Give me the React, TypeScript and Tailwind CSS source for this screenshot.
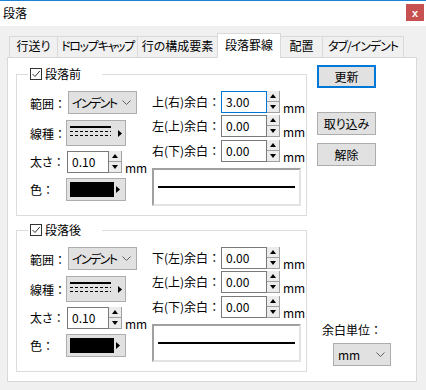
import React from "react";

function Checkbox() {
  return (
    <svg width="12" height="12" viewBox="0 0 12 12" className="shrink-0">
      <rect x="0.5" y="0.5" width="11" height="11" fill="#fff" stroke="#333" />
      <path d="M2.5 6 L5 8.5 L9.8 3" fill="none" stroke="#333" strokeWidth="1" />
    </svg>
  );
}

function Chevron() {
  return (
    <svg width="9" height="5" viewBox="0 0 9 5" className="shrink-0">
      <path d="M0.5 0.5 L4.5 4.5 L8.5 0.5" fill="none" stroke="#606060" strokeWidth="1" />
    </svg>
  );
}

function RightArrow() {
  return (
    <svg width="4" height="7" viewBox="0 0 4 7" className="shrink-0">
      <polygon points="0,0 4,3.5 0,7" fill="#000" />
    </svg>
  );
}

function Colon() {
  return <span className="[font-feature-settings:normal]">：</span>;
}

function Spinner() {
  return (
    <div className="flex flex-col w-[13px] h-[22px]">
      <div className="h-[11px] bg-[#ececec] border-r border-b border-[#a0a0a0] flex items-center justify-center">
        <svg width="6" height="4" viewBox="0 0 6 4">
          <polygon points="0,4 3,0 6,4" fill="#000" />
        </svg>
      </div>
      <div className="h-[11px] bg-[#ececec] border-r border-b border-[#a0a0a0] flex items-center justify-center">
        <svg width="6" height="4" viewBox="0 0 6 4">
          <polygon points="0,0 6,0 3,4" fill="#000" />
        </svg>
      </div>
    </div>
  );
}

function Dropdown({ text, width, tight }: { text: string; width: string; tight?: boolean }) {
  return (
    <div
      className={`${width} h-[23px] border border-[#adadad] bg-[#e1e1e1] flex items-center justify-between pl-[3px] pr-[5px]`}
    >
      <span className={tight ? "leading-[16px] whitespace-nowrap tracking-[-1.6px]" : "leading-[16px] whitespace-nowrap pl-[1px]"}>
        {text}
      </span>
      <Chevron />
    </div>
  );
}

function LineButton() {
  return (
    <div className="w-[60px] h-[26px] border border-[#adadad] bg-[#e1e1e1] flex items-start pl-[3px] pt-[5px]">
      <svg width="52" height="13" viewBox="0 0 52 13">
        <rect x="0" y="0" width="41" height="2" fill="#000" />
        <line x1="0" y1="5.5" x2="41" y2="5.5" stroke="#000" strokeDasharray="3 2" />
        <line x1="0" y1="9.5" x2="41" y2="9.5" stroke="#000" strokeDasharray="3 2" />
        <polygon points="48,4 52,7.5 48,11" fill="#000" />
      </svg>
    </div>
  );
}

function ColorButton() {
  return (
    <div className="w-[60px] h-[23px] border border-[#adadad] bg-[#e1e1e1] flex items-center pl-[3px] gap-[2px]">
      <div className="w-[44px] h-[15px] bg-black" />
      <RightArrow />
    </div>
  );
}

function SpinField({ value, focused, inputW }: { value: string; focused?: boolean; inputW: "small" | "large" }) {
  const border = focused ? "border-[#0078d7]" : "border-[#7a7a7a]";
  const w = inputW === "small" ? "w-[42px]" : "w-[46px]";
  return (
    <div className="flex">
      <div className={`${w} h-[22px] border ${border} bg-white flex items-center pl-[4px]`}>
        <span className="leading-[16px]">{value}</span>
      </div>
      <Spinner />
      <span className="self-end ml-[3px] leading-[14px] mb-[-2px]">mm</span>
    </div>
  );
}

function Group({ title, labels, first }: { title: string; labels: string[]; first: string }) {
  return (
    <fieldset className="w-[291px] h-[150px] border border-[#dcdcdc] min-w-0">
      <legend className="ml-[11px] w-[74px] h-[16px] pl-[2px]">
        <span className="flex items-center gap-[3px] h-[16px]">
          <Checkbox />
          <span className="leading-[16px]">{title}</span>
        </span>
      </legend>
      <div className="flex pt-[9px]">
        <div className="w-[135px] pl-[13px] flex flex-col">
          <div className="flex items-center h-[23px]">
            <span className="w-[38px] leading-[16px] mt-[3px] whitespace-nowrap">
              範囲<Colon />
            </span>
            <Dropdown text="インデント" width="w-[69px]" tight />
          </div>
          <div className="flex items-center h-[26px] mt-[6px]">
            <span className="w-[36px] leading-[16px] mt-[2px] whitespace-nowrap">
              線種<Colon />
            </span>
            <LineButton />
          </div>
          <div className="flex items-center h-[22px] mt-[5px]">
            <span className="w-[37px] leading-[16px] whitespace-nowrap">
              太さ<Colon />
            </span>
            <SpinField value="0.10" inputW="small" />
          </div>
          <div className="flex items-center h-[23px] mt-[5px]">
            <span className="w-[36px] leading-[16px] mt-[1px] whitespace-nowrap">
              色<Colon />
            </span>
            <ColorButton />
          </div>
        </div>
        <div className="flex flex-col">
          <div className="flex items-center h-[22px]">
            <span className="w-[69px] leading-[16px] whitespace-nowrap">
              {labels[0]}
              <Colon />
            </span>
            <SpinField value={first} focused={first === "3.00"} inputW="large" />
          </div>
          <div className="flex items-center h-[22px] mt-[2px]">
            <span className="w-[69px] leading-[16px] whitespace-nowrap">
              {labels[1]}
              <Colon />
            </span>
            <SpinField value="0.00" inputW="large" />
          </div>
          <div className="flex items-center h-[22px] mt-[3px]">
            <span className="w-[69px] leading-[16px] whitespace-nowrap">
              {labels[2]}
              <Colon />
            </span>
            <SpinField value="0.00" inputW="large" />
          </div>
          <div className="w-[149px] h-[38px] mt-[6px] border-2 border-t-[#a0a0a0] border-l-[#a0a0a0] border-r-[#e3e3e3] border-b-[#e3e3e3] bg-white flex items-center px-[4px]">
            <div className="w-full h-[2px] bg-black" />
          </div>
        </div>
      </div>
    </fieldset>
  );
}

function Button({ text, primary }: { text: string; primary?: boolean }) {
  return (
    <div
      className={
        primary
          ? "w-[59px] h-[23px] border-2 border-[#0078d7] bg-[#e1e1e1] flex items-center justify-center"
          : "w-[59px] h-[23px] border border-[#adadad] bg-[#e1e1e1] flex items-center justify-center"
      }
    >
      <span className="leading-[16px] whitespace-nowrap">{text}</span>
    </div>
  );
}

const tabs: { label: string; w: string; tr: string; active?: boolean; bl: boolean; br: boolean }[] = [
  { label: "行送り", w: "w-[48px]", tr: "", bl: true, br: false },
  { label: "ドロップキャップ", w: "w-[80px]", tr: "tracking-[-1.3px]", bl: true, br: false },
  { label: "行の構成要素", w: "w-[80px]", tr: "", bl: true, br: false },
  { label: "段落罫線", w: "w-[64px]", tr: "", active: true, bl: true, br: true },
  { label: "配置", w: "w-[41px]", tr: "", bl: false, br: false },
  { label: "タブ/インデント", w: "w-[82px]", tr: "tracking-[-1px]", bl: true, br: true },
];

export default function App() {
  return (
    <div className="w-[426px] h-[390px] bg-[#f0f0f0] overflow-hidden text-[12px] text-black font-['Noto_Sans_CJK_JP','Noto_Sans',sans-serif] [font-feature-settings:'palt']">
      <div className="h-[26px] bg-white border-t border-[#1b84d6] flex items-start justify-between">
        <span className="ml-[3px] mt-[4px] leading-[16px]">段落</span>
        <div className="mt-[3px] mr-[2px] w-[18px] h-[17px] bg-[#c75050] flex items-center justify-center">
          <span className="text-white text-[11px] font-bold leading-[12px] font-['Liberation_Sans',sans-serif]">x</span>
        </div>
      </div>
      <div className="flex items-end h-[31px] pl-[9px]">
        {tabs.map((t) => (
          <div
            key={t.label}
            className={[
              t.w,
              "flex items-center justify-center border-t border-[#d9d9d9]",
              t.active ? "h-[25px] bg-white mb-[-1px] relative z-10 pb-[3px]" : "h-[21px] bg-[#f0f0f0] pb-[2px]",
              t.bl ? "border-l" : "",
              t.br ? "border-r" : "",
            ].join(" ")}
          >
            <span className={`leading-[16px] whitespace-nowrap ${t.tr}`}>{t.label}</span>
          </div>
        ))}
      </div>
      <div className="ml-[7px] w-[410px] h-[325px] border border-[#d9d9d9] bg-white flex">
        <div className="ml-[8px] mt-[8px] flex flex-col gap-[6px]">
          <Group title="段落前" labels={["上(右)余白", "左(上)余白", "右(下)余白"]} first="3.00" />
          <Group title="段落後" labels={["下(左)余白", "左(上)余白", "右(下)余白"]} first="0.00" />
        </div>
        <div className="ml-[10px] mt-[7px] flex flex-col">
          <Button text="更新" primary />
          <div className="mt-[24px]">
            <Button text="取り込み" />
          </div>
          <div className="mt-[8px]">
            <Button text="解除" />
          </div>
          <span className="mt-[156px] ml-[5px] leading-[16px] whitespace-nowrap">
            余白単位<Colon />
          </span>
          <div className="mt-[5px] ml-[16px]">
            <Dropdown text="mm" width="w-[58px]" />
          </div>
        </div>
      </div>
    </div>
  );
}
